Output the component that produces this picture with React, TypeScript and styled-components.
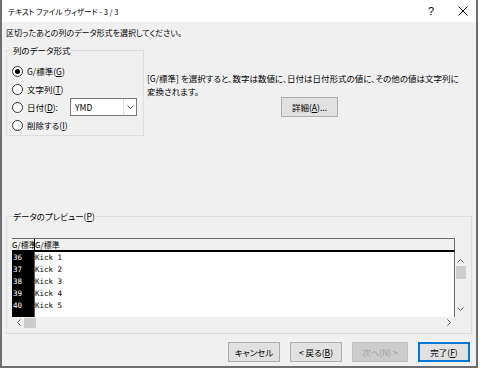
import styled, { createGlobalStyle } from "styled-components";

const GlobalStyle = createGlobalStyle`
  html, body {
    margin: 0;
    padding: 0;
    background: #ffffff;
  }
  body {
    font-family: "Noto Sans CJK JP", "Noto Sans", sans-serif;
    font-size: 8.5px;
    font-feature-settings: "palt";
    color: #000;
  }
`;

const ui = `"Noto Sans CJK JP", "Noto Sans", sans-serif`;

const rows = [
  { no: "36", text: "Kick 1" },
  { no: "37", text: "Kick 2" },
  { no: "38", text: "Kick 3" },
  { no: "39", text: "Kick 4" },
  { no: "40", text: "Kick 5" },
];

function App() {
  return (
    <>
      <GlobalStyle />
      <Window>
        <TitleBar>
          <span>テキスト ファイル ウィザード - 3 / 3</span>
          <TitleButtons>
            <span>?</span>
            <svg width="10" height="10" viewBox="0 0 10 10">
              <path d="M0.5 0.5 L9.5 9.5 M9.5 0.5 L0.5 9.5" stroke="#000" strokeWidth="1" />
            </svg>
          </TitleButtons>
        </TitleBar>
        <Body>
          <Instruction>区切ったあとの列のデータ形式を選択してください。</Instruction>
          <TopSection>
            <FormatGroup>
              <legend>列のデータ形式</legend>
              <RadioRow>
                <Radio $checked />
                <span>G/標準(<u>G</u>)</span>
              </RadioRow>
              <RadioRow>
                <Radio />
                <span>文字列(<u>T</u>)</span>
              </RadioRow>
              <RadioRow>
                <Radio />
                <DateLabel>日付(<u>D</u>):</DateLabel>
                <Select>
                  <span>YMD</span>
                  <SelectArrow>
                    <svg width="7" height="4" viewBox="0 0 7 4">
                      <path d="M0.5 0.5 L3.5 3.5 L6.5 0.5" stroke="#555" fill="none" strokeWidth="1" />
                    </svg>
                  </SelectArrow>
                </Select>
              </RadioRow>
              <RadioRow>
                <Radio />
                <span>削除する(<u>I</u>)</span>
              </RadioRow>
            </FormatGroup>
            <Description>
              <p>
                [G/標準] を選択すると、数字は数値に、日付は日付形式の値に、その他の値は文字列に
                <br />
                変換されます。
              </p>
              <Button type="button" $w={57}>
                詳細(<u>A</u>)...
              </Button>
            </Description>
          </TopSection>
          <PreviewGroup>
            <legend>
              データのプレビュー(<u>P</u>)
            </legend>
            <Grid>
              <HeaderRow>
                <FirstHeader>G/標準</FirstHeader>
                <span>G/標準</span>
              </HeaderRow>
              <Corner />
              <DataArea>
                <NumberCol>
                  {rows.map((r) => (
                    <Cell key={r.no}>{r.no}</Cell>
                  ))}
                </NumberCol>
                <TextCol>
                  {rows.map((r) => (
                    <Cell key={r.no}>{r.text}</Cell>
                  ))}
                </TextCol>
              </DataArea>
              <VScroll>
                <ScrollGlyph>
                  <svg width="7" height="4" viewBox="0 0 7 4">
                    <path d="M0.5 3.5 L3.5 0.5 L6.5 3.5" stroke="#555" fill="none" strokeWidth="1" />
                  </svg>
                </ScrollGlyph>
                <VThumb />
                <Spacer />
                <ScrollGlyph>
                  <svg width="7" height="4" viewBox="0 0 7 4">
                    <path d="M0.5 0.5 L3.5 3.5 L6.5 0.5" stroke="#555" fill="none" strokeWidth="1" />
                  </svg>
                </ScrollGlyph>
              </VScroll>
              <HScroll>
                <ScrollGlyph>
                  <svg width="4" height="7" viewBox="0 0 4 7">
                    <path d="M3.5 0.5 L0.5 3.5 L3.5 6.5" stroke="#555" fill="none" strokeWidth="1" />
                  </svg>
                </ScrollGlyph>
                <HThumb />
                <Spacer />
                <ScrollGlyph>
                  <svg width="4" height="7" viewBox="0 0 4 7">
                    <path d="M0.5 0.5 L3.5 3.5 L0.5 6.5" stroke="#555" fill="none" strokeWidth="1" />
                  </svg>
                </ScrollGlyph>
              </HScroll>
              <Corner />
            </Grid>
          </PreviewGroup>
          <ButtonRow>
            <Button type="button" $w={52}>キャンセル</Button>
            <Button type="button" $w={52}>
              &lt; 戻る(<u>B</u>)
            </Button>
            <Button type="button" $w={56} disabled>
              次へ(N) &gt;
            </Button>
            <Button type="button" $w={52} $default>
              完了(<u>F</u>)
            </Button>
          </ButtonRow>
        </Body>
      </Window>
    </>
  );
}

const Window = styled.div`
  width: 478px;
  height: 368px;
  box-sizing: border-box;
  border-left: 2px solid #6e6e6e;
  border-right: 2px solid #6e6e6e;
  border-bottom: 2px solid #6e6e6e;
  display: flex;
  flex-direction: column;
  background: #f0f0f0;
`;

const TitleBar = styled.div`
  height: 22px;
  flex: none;
  background: #ffffff;
  display: flex;
  align-items: center;
  justify-content: space-between;
  padding: 0 8px 0 6px;
  font-size: 7.6px;
  font-family: ${ui};
`;

const TitleButtons = styled.div`
  display: flex;
  align-items: center;
  gap: 24px;
  font-family: "Liberation Sans", sans-serif;
  font-size: 11px;
`;

const Body = styled.div`
  flex: 1;
  display: flex;
  flex-direction: column;
  padding: 0 4px;
`;

const Instruction = styled.div`
  margin-top: 5px;
  line-height: 12px;
  font-size: 8px;
`;

const TopSection = styled.div`
  display: flex;
  gap: 3px;
  margin-top: 5px;
  height: 92px;
`;

const FormatGroup = styled.fieldset`
  width: 138px;
  box-sizing: border-box;
  margin: 0;
  padding: 6px 0 3px 5px;
  border: 1px solid #dcdcdc;
  border-radius: 0;
  legend {
    padding: 0 1px;
    margin-left: 0;
    line-height: 12px;
  }
`;

const RadioRow = styled.div`
  height: 18px;
  display: flex;
  align-items: center;
  gap: 4px;
`;

const Radio = styled.span<{ $checked?: boolean }>`
  width: 11px;
  height: 11px;
  box-sizing: border-box;
  border-radius: 50%;
  border: 1px solid #333;
  background: #fff;
  display: flex;
  align-items: center;
  justify-content: center;
  &::after {
    content: "";
    width: 5px;
    height: 5px;
    border-radius: 50%;
    background: ${(p) => (p.$checked ? "#000" : "transparent")};
  }
`;

const DateLabel = styled.span`
  width: 39px;
`;

const Select = styled.div`
  width: 67px;
  height: 18px;
  box-sizing: border-box;
  border: 1px solid #7a7a7a;
  background: #fff;
  display: flex;
  align-items: center;
  padding-left: 4px;
  span {
    flex: 1;
  }
`;

const SelectArrow = styled.div`
  width: 12px;
  height: 100%;
  border-left: 1px solid #dcdcdc;
  display: flex;
  align-items: center;
  justify-content: center;
`;

const Description = styled.div`
  flex: 1;
  display: flex;
  flex-direction: column;
  align-items: center;
  p {
    align-self: flex-start;
    margin: 28px 0 0;
    line-height: 13px;
  }
  button {
    margin-top: -1px;
  }
`;

const Button = styled.button<{ $w: number; $default?: boolean }>`
  width: ${(p) => p.$w}px;
  height: 20px;
  padding: 0;
  font-family: ${ui};
  font-size: 8.5px;
  font-feature-settings: "palt";
  color: #000;
  background: #e1e1e1;
  border: ${(p) => (p.$default ? "2px solid #0078d7" : "1px solid #adadad")};
  border-radius: 0;
  &:disabled {
    color: #a0a0a0;
    background: #cccccc;
    border-color: #bfbfbf;
  }
`;

const PreviewGroup = styled.fieldset`
  margin: 74px 0 0;
  height: 124px;
  box-sizing: border-box;
  padding: 16px 5px 3px 5px;
  border: 1px solid #dcdcdc;
  legend {
    padding: 0 1px;
    line-height: 12px;
  }
`;

const Grid = styled.div`
  display: grid;
  grid-template-columns: 1fr 11px;
  grid-template-rows: 14px 65px 11px;
`;

const HeaderRow = styled.div`
  display: flex;
  align-items: center;
  box-sizing: border-box;
  border-top: 1px solid #6a6a6a;
  border-right: 1px solid #6a6a6a;
  border-bottom: 2px solid #000;
  background: #f0f0f0;
  font-size: 8px;
  overflow: hidden;
  white-space: nowrap;
`;

const FirstHeader = styled.span`
  width: 23px;
  flex: none;
  overflow: hidden;
  box-sizing: border-box;
  border-right: 1px solid #000;
  height: 100%;
  display: flex;
  align-items: center;
`;

const Corner = styled.div`
  background: #f0f0f0;
`;

const DataArea = styled.div`
  display: flex;
  background: #fff;
  border-right: 1px solid #6a6a6a;
  font-family: "DejaVu Sans Mono", monospace;
  font-size: 7.5px;
`;

const NumberCol = styled.div`
  width: 23px;
  background: #000;
  color: #fff;
  border-right: 1px solid #555;
  padding-left: 1px;
  box-sizing: border-box;
`;

const TextCol = styled.div`
  padding-left: 0;
`;

const Cell = styled.div`
  height: 12px;
  line-height: 12px;
  white-space: pre;
`;

const VScroll = styled.div`
  display: flex;
  flex-direction: column;
  align-items: center;
  background: #f0f0f0;
  padding: 3px 0 3px;
`;

const HScroll = styled.div`
  display: flex;
  align-items: center;
  background: #f0f0f0;
  padding: 0 1px;
`;

const ScrollGlyph = styled.div`
  width: 11px;
  height: 11px;
  display: flex;
  align-items: center;
  justify-content: center;
  flex: none;
`;

const VThumb = styled.div`
  width: 10px;
  height: 13px;
  background: #cdcdcd;
`;

const HThumb = styled.div`
  width: 12px;
  height: 10px;
  background: #cdcdcd;
`;

const Spacer = styled.div`
  flex: 1;
`;

const ButtonRow = styled.div`
  display: flex;
  justify-content: flex-end;
  gap: 10px;
  margin-top: 8px;
  padding-right: 2px;
`;

export default App;
